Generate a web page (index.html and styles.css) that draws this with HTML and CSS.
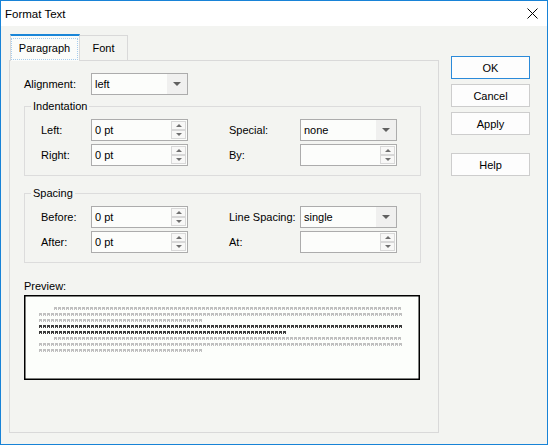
FILE: index.html
```html
<!DOCTYPE html>
<html>
<head>
<meta charset="utf-8">
<link rel="stylesheet" href="styles.css">
</head>
<body>
<div class="window">
  <div class="titlebar">
    <span class="title">Format Text</span>
    <svg class="close" width="11" height="11" viewBox="0 0 11 11"><path d="M0.5 0.5 L10.5 10.5 M10.5 0.5 L0.5 10.5" stroke="#000" stroke-width="1" fill="none"/></svg>
  </div>
  <div class="client">
    <div class="main">
      <div class="tabs">
        <div class="tab active"><span class="focus">Paragraph</span></div>
        <div class="tab">Font</div>
      </div>
      <div class="panel">
        <div class="align-row">
          <span class="lbl-align">Alignment:</span>
          <div class="select"><span class="val">left</span><span class="drop"><i class="arrow"></i></span></div>
        </div>

        <fieldset class="group">
          <legend>Indentation</legend>
          <div class="grid">
            <span>Left:</span>
            <div class="spin"><span class="val">0 pt</span><span class="sbs"><span class="sb"><i class="up"></i></span><span class="sb"><i class="down"></i></span></span></div>
            <span></span>
            <span>Special:</span>
            <div class="select"><span class="val">none</span><span class="drop"><i class="arrow"></i></span></div>

            <span>Right:</span>
            <div class="spin"><span class="val">0 pt</span><span class="sbs"><span class="sb"><i class="up"></i></span><span class="sb"><i class="down"></i></span></span></div>
            <span></span>
            <span>By:</span>
            <div class="spin"><span class="val"></span><span class="sbs"><span class="sb"><i class="up"></i></span><span class="sb"><i class="down"></i></span></span></div>
          </div>
        </fieldset>

        <fieldset class="group group2">
          <legend>Spacing</legend>
          <div class="grid">
            <span>Before:</span>
            <div class="spin"><span class="val">0 pt</span><span class="sbs"><span class="sb"><i class="up"></i></span><span class="sb"><i class="down"></i></span></span></div>
            <span></span>
            <span>Line Spacing:</span>
            <div class="select"><span class="val">single</span><span class="drop"><i class="arrow"></i></span></div>

            <span>After:</span>
            <div class="spin"><span class="val">0 pt</span><span class="sbs"><span class="sb"><i class="up"></i></span><span class="sb"><i class="down"></i></span></span></div>
            <span></span>
            <span>At:</span>
            <div class="spin"><span class="val"></span><span class="sbs"><span class="sb"><i class="up"></i></span><span class="sb"><i class="down"></i></span></span></div>
          </div>
        </fieldset>

        <div class="preview-label">Preview:</div>
        <div class="preview">
          <div class="pl g ind"></div>
          <div class="pl g full"></div>
          <div class="pl g short"></div>
          <div class="pl d full"></div>
          <div class="pl d mid"></div>
          <div class="pl g ind"></div>
          <div class="pl g full"></div>
          <div class="pl g short"></div>
        </div>
      </div>
    </div>
    <div class="buttons">
      <div class="btn default">OK</div>
      <div class="btn">Cancel</div>
      <div class="btn">Apply</div>
      <div class="btn help">Help</div>
    </div>
  </div>
</div>
</body>
</html>
```

FILE: styles.css
```css
html, body {
  margin: 0;
  padding: 0;
}
body {
  width: 548px;
  height: 445px;
  overflow: hidden;
}
.window {
  box-sizing: border-box;
  width: 548px;
  height: 445px;
  border: 1px solid #1883d7;
  display: flex;
  flex-direction: column;
  font: 11px "Liberation Sans", Arial, sans-serif;
  color: #000;
  background: #f3f4f1;
}
.titlebar {
  height: 25px;
  flex: none;
  background: #fff;
  display: flex;
  align-items: center;
  justify-content: space-between;
  padding-left: 4px;
}
.title {
  font-size: 11.5px;
}
.close {
  margin-right: 9px;
}
.client {
  flex: 1;
  display: flex;
}
.main {
  margin: 8px 0 0 8px;
  width: 430px;
  display: flex;
  flex-direction: column;
}
.tabs {
  display: flex;
  align-items: flex-end;
  height: 26px;
  padding-left: 1px;
}
.tab {
  box-sizing: border-box;
  height: 25px;
  width: 48px;
  border-top: 1px solid #d9d9d9;
  border-right: 1px solid #d9d9d9;
  display: flex;
  align-items: center;
  justify-content: center;
  background: #f3f4f1;
}
.tab.active {
  height: 27px;
  width: 70px;
  margin-bottom: -1px;
  border-top: 2px solid #1a86d8;
  border-left: 1px solid #d9d9d9;
  border-right: 1px solid #d9d9d9;
  background: #fbfcfa;
  position: relative;
  z-index: 1;
  align-items: flex-start;
  justify-content: flex-start;
  padding-top: 2px;
}
.focus {
  box-sizing: border-box;
  width: 67px;
  height: 22px;
  border: 1px dotted #a6cdee;
  display: flex;
  align-items: center;
  justify-content: center;
  padding-bottom: 2px;
}
.panel {
  box-sizing: border-box;
  height: 373px;
  border: 1px solid #d9d9d9;
  padding: 12px 17px 0 14px;
}
.align-row {
  display: flex;
  align-items: center;
}
.lbl-align {
  width: 67px;
}
.select, .spin {
  box-sizing: border-box;
  width: 97px;
  height: 22px;
  border: 1px solid #acacac;
  background: #fcfdfb;
  display: flex;
}
.val {
  flex: 1;
  padding-left: 3px;
  line-height: 20px;
}
.drop {
  width: 20px;
  background: #f0f0ef;
  display: flex;
  align-items: center;
  justify-content: center;
}
.arrow {
  width: 0;
  height: 0;
  border-left: 4px solid transparent;
  border-right: 4px solid transparent;
  border-top: 4px solid #606060;
}
.sbs {
  width: 15px;
  margin: 1px 1px 1px 0;
  display: flex;
  flex-direction: column;
}
.sb {
  box-sizing: border-box;
  flex: 1;
  border: 1px solid #d8d8d8;
  background: #f8f8f7;
  display: flex;
  align-items: center;
  justify-content: center;
}
.up {
  width: 0;
  height: 0;
  border-left: 3px solid transparent;
  border-right: 3px solid transparent;
  border-bottom: 3px solid #707070;
}
.down {
  width: 0;
  height: 0;
  border-left: 3px solid transparent;
  border-right: 3px solid transparent;
  border-top: 3px solid #707070;
}
.group {
  margin: 4px 0 0 0;
  padding: 0;
  min-width: 0;
  border: 1px solid #dcdcdc;
}
.group2 {
  margin-top: 10px;
}
.group legend {
  margin-left: 6px;
  padding: 0 2px;
  line-height: 14px;
}
.grid {
  display: grid;
  grid-template-columns: 50px 97px 41px 71px 97px;
  grid-template-rows: 22px 22px;
  row-gap: 3px;
  align-items: center;
  padding: 6px 0 9px 16px;
}
.grid span:empty {
  display: block;
}
.preview-label {
  margin-top: 16px;
  line-height: 14px;
  margin-bottom: 2px;
}
.preview {
  box-sizing: border-box;
  width: 396px;
  height: 85px;
  border: 1px solid #000;
  box-shadow: inset 0 0 0 0.5px #000;
  background: #fcfefb;
  padding: 11px 0 0 14px;
}
.pl {
  height: 3px;
  margin-bottom: 3px;
  --c: #c0c0c0;
  background:
    repeating-linear-gradient(90deg, var(--c) 0 3px, transparent 3px 4px) left top / 100% 2px no-repeat,
    repeating-linear-gradient(90deg, var(--c) 0 1px, transparent 1px 2px, var(--c) 2px 3px, transparent 3px 4px) left bottom / 100% 1px no-repeat;
}
.pl.g { --c: #c0c0c0; }
.pl.d { --c: #3c3c3c; }
.pl.ind { margin-left: 15px; width: 347px; }
.pl.full { width: 363px; }
.pl.short { width: 163px; }
.pl.mid { width: 247px; }
.buttons {
  margin: 30px 0 0 12px;
  display: flex;
  flex-direction: column;
  gap: 5px;
}
.btn {
  box-sizing: border-box;
  width: 79px;
  height: 23px;
  border: 1px solid #cdcdcd;
  background: #fdfdfd;
  display: flex;
  align-items: center;
  justify-content: center;
}
.btn.default {
  border-color: #2b8ad9;
}
.btn.help {
  margin-top: 13px;
}
```
